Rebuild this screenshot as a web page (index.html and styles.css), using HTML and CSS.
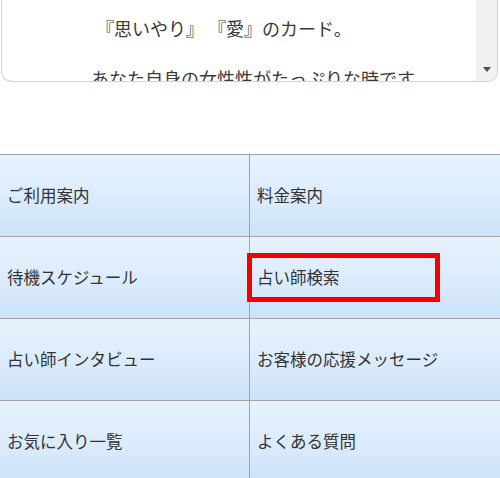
FILE: index.html
```html
<!DOCTYPE html>
<html lang="ja">
<head>
<meta charset="utf-8">
<title>メニュー</title>
<link rel="stylesheet" href="styles.css">
</head>
<body>
<div class="page">
  <div class="memo">
    <div class="memo-text">
      <p class="line first">『思いやり』 『愛』のカード。</p>
      <p class="line blank">&nbsp;</p>
      <p class="line">あなた自身の女性性がたっぷりな時です。</p>
    </div>
    <div class="scrollbar"><span class="arrow"></span></div>
  </div>
  <nav class="menu">
    <a class="cell left">ご利用案内</a>
    <a class="cell">料金案内</a>
    <a class="cell left">待機スケジュール</a>
    <a class="cell marked">占い師検索<span class="highlight"></span></a>
    <a class="cell left">占い師インタビュー</a>
    <a class="cell">お客様の応援メッセージ</a>
    <a class="cell left">お気に入り一覧</a>
    <a class="cell">よくある質問</a>
  </nav>
</div>
</body>
</html>
```
FILE: styles.css
```css
html, body {
  margin: 0;
  padding: 0;
  background: #ffffff;
}
body {
  font-family: "Noto Sans CJK JP", "Noto Sans", sans-serif;
  color: #333333;
  overflow: hidden;
}
.page {
  width: 500px;
}
.memo {
  display: flex;
  margin: 0 2px 0 1px;
  height: 81px;
  border: 1px solid #d4d4d4;
  border-top: none;
  border-radius: 0 0 11px 11px;
  overflow: hidden;
}
.memo-text {
  flex: 1;
  overflow: hidden;
  padding: 16px 0 0 89px;
  font-size: 18px;
  color: #3a3a3a;
}
.line {
  margin: 0;
  line-height: 25px;
  white-space: nowrap;
}
.line.first {
  padding-left: 5px;
}
.scrollbar {
  width: 21px;
  background: #f1f1f1;
  display: flex;
  align-items: flex-end;
  justify-content: center;
  padding-bottom: 9px;
  box-sizing: border-box;
}
.arrow {
  width: 0;
  height: 0;
  border-left: 4px solid transparent;
  border-right: 4px solid transparent;
  border-top: 5px solid #505050;
}
.menu {
  margin-top: 72px;
  display: grid;
  grid-template-columns: 250px 1fr;
  border-top: 1px solid #a3a3a3;
}
.cell {
  position: relative;
  display: flex;
  align-items: center;
  height: 82px;
  box-sizing: border-box;
  padding: 0 0 2px 7px;
  border-bottom: 1px solid #a3a3a3;
  background: linear-gradient(to bottom, #e7f2fd 0%, #dcecfc 50%, #cce2f9 100%);
  font-size: 16.5px;
  color: #333333;
  text-decoration: none;
  white-space: nowrap;
}
.cell.left {
  border-right: 1px solid #a3a3a3;
}
.highlight {
  position: absolute;
  left: -3px;
  top: 16px;
  width: 193px;
  height: 49px;
  box-sizing: border-box;
  border: 5px solid #f30000;
}
```
